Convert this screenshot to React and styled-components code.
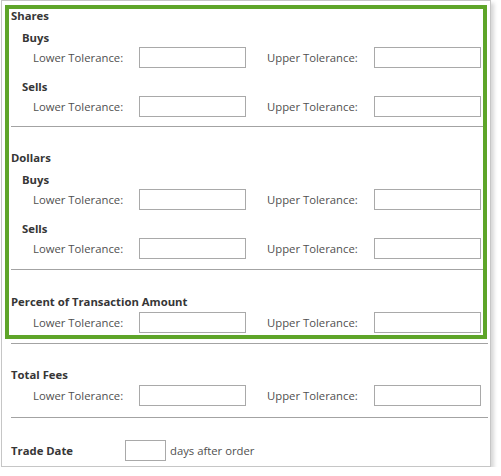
import React from "react";
import styled, { createGlobalStyle } from "styled-components";

const GlobalStyle = createGlobalStyle`
  html, body {
    margin: 0;
    padding: 0;
    background: #ffffff;
  }
  body {
    font-family: "Open Sans", "Noto Sans", sans-serif;
  }
`;

const sections = [
	{
		title: "Shares",
		groups: ["Buys", "Sells"],
		top: 0,
		rule: 9,
	},
	{
		title: "Dollars",
		groups: ["Buys", "Sells"],
		top: 24,
		rule: 10,
	},
	{
		title: "Percent of Transaction Amount",
		groups: [null],
		top: 25,
	},
];

function ToleranceRow(){
	return (
		<Row>
			<Label>Lower Tolerance:</Label>
			<Field type="text" />
			<span />
			<Label>Upper Tolerance:</Label>
			<Field type="text" />
		</Row>
	);
}

export default function App(){
	return (
		<>
			<GlobalStyle />
			<Frame>
				<Highlight>
					{sections.map(section => (
						<Section key={section.title} top={section.top}>
							<Heading>{section.title}</Heading>
							{section.groups.map((name, j) => (
								<Group key={j} named={!!name} first={j === 0}>
									{name && <SubHeading>{name}</SubHeading>}
									<ToleranceRow />
								</Group>
							))}
							{section.rule && <Divider inset after={section.rule} />}
						</Section>
					))}
				</Highlight>
				<Divider after={4} />
				<Section outside top={24}>
					<Heading>Total Fees</Heading>
					<Group>
						<ToleranceRow />
					</Group>
				</Section>
				<Divider after={11} />
				<DateRow>
					<Heading>Trade Date</Heading>
					<DaysField type="text" />
					<Hint>days after order</Hint>
				</DateRow>
			</Frame>
		</>
	);
}

const Frame = styled.div`
    width: 488px;
    margin-left: 1px;
    border: 1px solid #c6c6c6;
    box-shadow: 3px 3px 4px rgba(0, 0, 0, 0.16);
    padding-bottom: 5px;
    background: #ffffff;
`;

const Highlight = styled.div`
    margin: 4px 3px 0 3px;
    border: 4px solid #5ea529;
    padding-bottom: 2px;
`;

const Section = styled.div`
    padding-top: ${props => props.top}px;
    padding-left: ${props => props.outside ? "9px" : "2px"};
`;

const Heading = styled.div`
    font-size: 11.3px;
    line-height: 14px;
    height: 14px;
    font-weight: 700;
    color: #363636;
    white-space: nowrap;
`;

const Group = styled.div`
    margin-top: ${props => props.named ? (props.first ? "6px" : "10px") : "3px"};
    padding-left: 11px;
`;

const SubHeading = styled.div`
    font-size: 11.3px;
    line-height: 17px;
    height: 17px;
    font-weight: 700;
    color: #363636;
    margin-bottom: 1px;
`;

const Row = styled.div`
    display: grid;
    grid-template-columns: 106px 107px 21px 107px 107px;
    align-items: center;
    height: 21px;
    padding-left: 11px;
`;

const Label = styled.span`
    font-size: 11.3px;
    color: #505050;
    white-space: nowrap;
`;

const Field = styled.input`
    box-sizing: border-box;
    width: 107px;
    height: 21px;
    margin: 0;
    border: 1px solid #a9a9a9;
    border-radius: 0;
    background: #ffffff;
    padding: 0 4px;
    font-family: inherit;
    font-size: 12px;
`;

const Divider = styled.div`
    height: 1px;
    background: #a3a3a3;
    margin: ${props => props.inset ? `${props.after}px 0 0 0` : `${props.after}px 2px 0 9px`};
`;

const DateRow = styled.div`
    display: flex;
    align-items: center;
    height: 21px;
    margin-top: 22px;
    padding-left: 9px;

    ${Heading} {
        width: 114px;
    }
`;

const DaysField = styled(Field)`
    width: 41px;
`;

const Hint = styled.span`
    font-size: 11.3px;
    color: #505050;
    margin-left: 4px;
`;
